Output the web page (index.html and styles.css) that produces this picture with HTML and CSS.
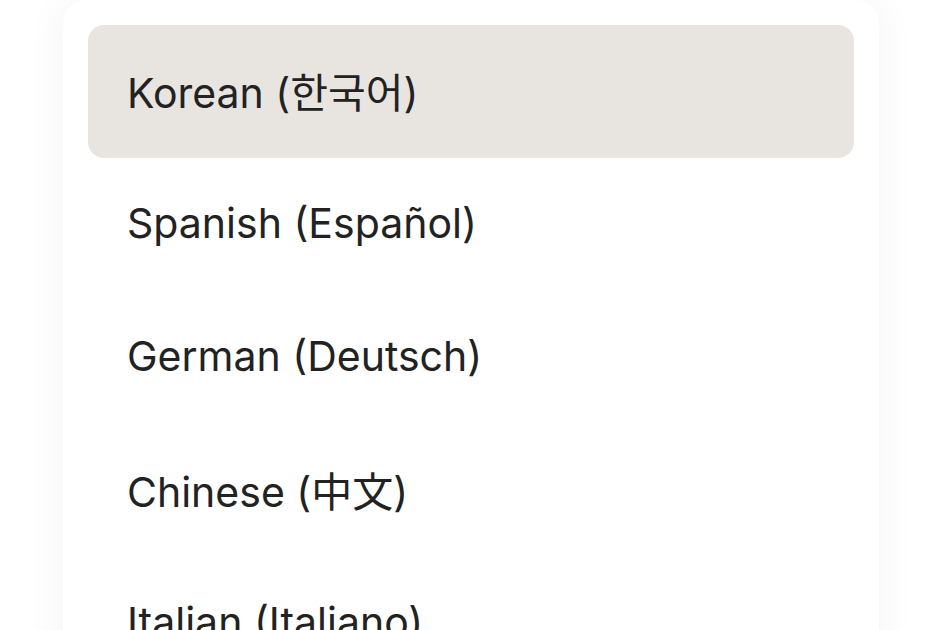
FILE: index.html
```html
<!DOCTYPE html>
<html lang="en">
<head>
<meta charset="utf-8">
<title>Language</title>
<link rel="stylesheet" href="styles.css">
</head>
<body>
<div class="page">
  <ul class="menu">
    <li class="item active">Korean (한국어)</li>
    <li class="item">Spanish (Español)</li>
    <li class="item">German (Deutsch)</li>
    <li class="item">Chinese (中文)</li>
    <li class="item">Italian (Italiano)</li>
  </ul>
</div>
</body>
</html>
```
FILE: styles.css
```css
html, body {
  margin: 0;
  padding: 0;
  background: #ffffff;
  height: 100%;
  overflow: hidden;
}
.page {
  padding-left: 63px;
}
.menu {
  list-style: none;
  margin: 0;
  width: 816px;
  box-sizing: border-box;
  padding: 25px;
  background: #ffffff;
  border-radius: 24px;
  box-shadow: 0 0 40px rgba(0, 0, 0, 0.05);
  font-family: Inter, "Noto Sans CJK KR", "Noto Sans CJK SC", sans-serif;
}
.item {
  height: 133px;
  box-sizing: border-box;
  display: flex;
  align-items: center;
  padding-left: 39px;
  padding-bottom: 4px;
  font-size: 41px;
  color: #222222;
  border-radius: 16px;
}
.active {
  background: #e8e5e1;
}
```
